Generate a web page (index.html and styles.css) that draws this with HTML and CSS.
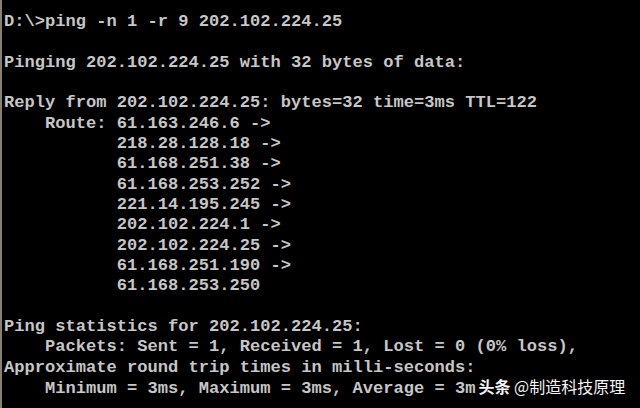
FILE: index.html
```html
<!DOCTYPE html>
<html>
<head>
<meta charset="utf-8">
<link rel="stylesheet" href="styles.css">
</head>
<body>
<div class="console">
  <div class="line">D:\&gt;ping -n 1 -r 9 202.102.224.25</div>
  <div class="line"></div>
  <div class="line">Pinging 202.102.224.25 with 32 bytes of data:</div>
  <div class="line"></div>
  <div class="line">Reply from 202.102.224.25: bytes=32 time=3ms TTL=122</div>
  <div class="line">    Route: 61.163.246.6 -&gt;</div>
  <div class="line">           218.28.128.18 -&gt;</div>
  <div class="line">           61.168.251.38 -&gt;</div>
  <div class="line">           61.168.253.252 -&gt;</div>
  <div class="line">           221.14.195.245 -&gt;</div>
  <div class="line">           202.102.224.1 -&gt;</div>
  <div class="line">           202.102.224.25 -&gt;</div>
  <div class="line">           61.168.251.190 -&gt;</div>
  <div class="line">           61.168.253.250</div>
  <div class="line"></div>
  <div class="line">Ping statistics for 202.102.224.25:</div>
  <div class="line">    Packets: Sent = 1, Received = 1, Lost = 0 (0% loss),</div>
  <div class="line">Approximate round trip times in milli-seconds:</div>
  <div class="line last"><span>    Minimum = 3ms, Maximum = 3ms, Average = 3m</span><span class="watermark"><b class="brand">头条</b> @制造科技原理</span></div>
</div>
</body>
</html>
```
FILE: styles.css
```css
html, body {
  margin: 0;
  padding: 0;
  background: #000;
}
.console {
  width: 640px;
  height: 408px;
  box-sizing: border-box;
  padding: 12px 0 0 2px;
  border-left: 2px solid #8a8070;
  background: #000;
  overflow: hidden;
  font-family: "Liberation Mono", monospace;
  font-weight: bold;
  font-size: 17.08px;
  color: #c6c6c6;
}
.line {
  height: 20.33px;
  line-height: 20.33px;
  white-space: pre;
}
.last {
  display: flex;
  align-items: baseline;
}
.watermark {
  margin-left: 3px;
  font-family: "Noto Sans CJK SC", sans-serif;
  font-weight: normal;
  font-size: 16px;
  line-height: 1;
  color: #f4f4f4;
}
.brand {
  font-weight: bold;
}
```
